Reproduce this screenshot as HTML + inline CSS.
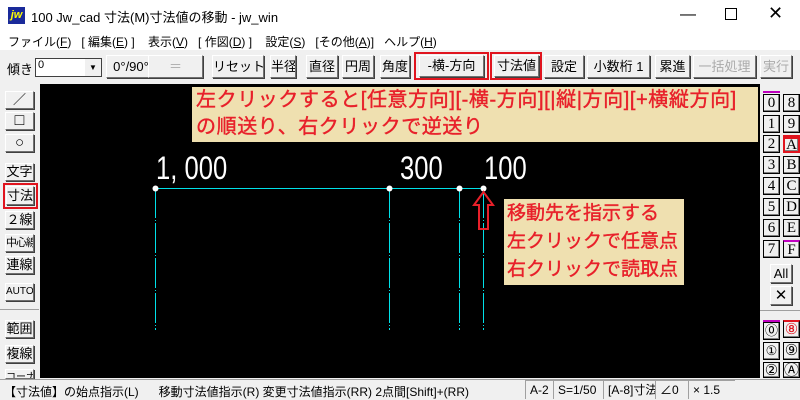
<!DOCTYPE html>
<html style="width:800px;height:400px;overflow:hidden"><head><meta charset="utf-8"><style>
*{margin:0;padding:0;box-sizing:border-box}
body{width:800px;height:400px;overflow:hidden;background:#f0f0f0;font-family:"Liberation Sans","Noto Sans CJK JP",sans-serif;position:relative;font-size:12px;color:#000}
.a{position:absolute}
.btn{position:absolute;background:#f0f0f0;border:1px solid #fff;border-right-color:#707070;border-bottom-color:#707070;box-shadow:1px 1px 0 #404040;text-align:center;font-size:13px;white-space:nowrap;overflow:hidden}
.rb{position:absolute;border:2px solid #e0141e}
.cv{position:absolute;left:40px;top:84px;width:720px;height:294px;background:#000}
.note{position:absolute;background:#efe0b0;color:#e8202a;font-size:20px;line-height:27px;padding-left:4px;white-space:nowrap;-webkit-text-stroke:0.4px #e8202a}
.num{position:absolute;color:#fff;font-size:32px;font-family:"Liberation Sans Narrow","Liberation Sans",sans-serif;transform:scaleX(.8);transform-origin:left}
.rbt{position:absolute;width:17px;height:18px;background:#f0f0f0;border:1px solid #000;box-shadow:inset -1px -1px 0 #808080;font-family:"Liberation Serif",serif;font-size:15px;text-align:center;line-height:16px}
.sb{position:absolute;top:380px;height:19px;border-left:1px solid #a0a0a0;border-top:1px solid #a0a0a0;line-height:18px;padding-left:4px;font-size:12px;white-space:nowrap;overflow:hidden}
.vl{position:absolute;top:104px;width:1px;height:142px;background:repeating-linear-gradient(#00e0e8 0 30px,#000 30px 32px,#00e0e8 32px 33px,#000 33px 35px)}
</style></head><body>
<div class="a" style="left:0;top:0;width:800px;height:31px;background:#fff"></div>
<div class="a" style="left:8px;top:7px;width:17px;height:17px;background:#1a2a9a;color:#ff0;font-weight:bold;font-style:italic;font-size:11px;line-height:17px;text-align:center">jw</div>
<div class="a" style="left:31px;top:7px;font-size:13px">100 Jw_cad 寸法(M)寸法値の移動 - jw_win</div>
<div class="a" style="left:680px;top:6px;font-size:16px">—</div>
<div class="a" style="left:725px;top:8px;width:12px;height:12px;border:1.5px solid #000"></div>
<div class="a" style="left:768px;top:3px;font-size:18px">✕</div>
<div class="a" style="left:0;top:31px;width:800px;height:19px;background:#fff"></div>
<div class="a" style="left:8px;top:33px;font-size:12px;white-space:nowrap">ファイル(<u>F</u>)&nbsp;&nbsp;&nbsp;[ 編集(<u>E</u>) ]&nbsp;&nbsp;&nbsp;&nbsp;表示(<u>V</u>)&nbsp;&nbsp;&nbsp;[ 作図(<u>D</u>) ]&nbsp;&nbsp;&nbsp;&nbsp;設定(<u>S</u>)&nbsp;&nbsp;&nbsp;[その他(<u>A</u>)]&nbsp;&nbsp;&nbsp;ヘルプ(<u>H</u>)</div>
<div class="a" style="left:7px;top:59px;font-size:13px">傾き</div>
<div class="a" style="left:35px;top:58px;width:67px;height:19px;background:#fff;border:1px solid #404040;font-size:11px;padding-left:2px">0<div class="a" style="right:0;top:0;width:16px;height:17px;background:#f0f0f0;font-size:8px;text-align:center;line-height:17px">▼</div></div>
<div class="btn" style="left:106px;top:55px;width:50px;height:23px;line-height:21px">0°/90°</div>
<div class="btn" style="left:148px;top:55px;width:55px;height:23px;line-height:21px;color:#aaa">＝</div>
<div class="btn" style="left:212px;top:55px;width:52px;height:23px;line-height:21px">リセット</div>
<div class="btn" style="left:270px;top:55px;width:26px;height:23px;line-height:21px">半径</div>
<div class="btn" style="left:306px;top:55px;width:32px;height:23px;line-height:21px">直径</div>
<div class="btn" style="left:342px;top:55px;width:32px;height:23px;line-height:21px">円周</div>
<div class="btn" style="left:380px;top:55px;width:30px;height:23px;line-height:21px">角度</div>
<div class="rb" style="left:414px;top:52px;width:75px;height:28px"></div>
<div class="btn" style="left:419px;top:55px;width:65px;height:22px;line-height:20px">-横-方向</div>
<div class="rb" style="left:490px;top:52px;width:52px;height:28px"></div>
<div class="btn" style="left:494px;top:55px;width:45px;height:22px;line-height:20px">寸法値</div>
<div class="btn" style="left:544px;top:55px;width:40px;height:23px;line-height:21px">設定</div>
<div class="btn" style="left:587px;top:55px;width:63px;height:23px;line-height:21px">小数桁 1</div>
<div class="btn" style="left:655px;top:55px;width:35px;height:23px;line-height:21px">累進</div>
<div class="btn" style="left:693px;top:55px;width:63px;height:23px;line-height:21px;color:#aaa">一括処理</div>
<div class="btn" style="left:760px;top:55px;width:32px;height:23px;line-height:21px;color:#aaa">実行</div>
<div class="btn" style="left:5px;top:91px;width:29px;height:18px;line-height:16px">／</div>
<div class="btn" style="left:5px;top:112px;width:29px;height:18px;line-height:16px;font-size:16px">□</div>
<div class="btn" style="left:5px;top:134px;width:29px;height:18px;line-height:16px;font-size:15px">○</div>
<div class="btn" style="left:5px;top:163px;width:29px;height:18px;line-height:16px">文字</div>
<div class="rb" style="left:3px;top:183px;width:35px;height:26px"></div>
<div class="btn" style="left:6px;top:186px;width:28px;height:19px;line-height:17px">寸法</div>
<div class="btn" style="left:5px;top:211px;width:29px;height:18px;line-height:16px">２線</div>
<div class="btn" style="left:5px;top:234px;width:29px;height:18px;line-height:16px;font-size:11px;letter-spacing:-1px">中心線</div>
<div class="btn" style="left:5px;top:256px;width:29px;height:18px;line-height:16px">連線</div>
<div class="btn" style="left:5px;top:283px;width:29px;height:18px;line-height:16px;font-size:10px">AUTO</div>
<div class="a" style="left:0;top:309px;width:39px;height:1px;background:#a0a0a0"></div>
<div class="btn" style="left:5px;top:320px;width:29px;height:18px;line-height:16px">範囲</div>
<div class="btn" style="left:5px;top:345px;width:29px;height:18px;line-height:16px">複線</div>
<div class="btn" style="left:5px;top:369px;width:29px;height:10px;line-height:16px;font-size:10px">コーナー</div>
<div class="cv">
<div class="a" style="left:115px;top:104px;width:329px;height:1px;background:#00e0e8"></div>
<div class="vl" style="left:115px"></div>
<div class="vl" style="left:349px"></div>
<div class="vl" style="left:419px"></div>
<div class="vl" style="left:443px"></div>
<svg width="720" height="294" style="position:absolute;left:0;top:0">
<g fill="#fff"><circle cx="115.5" cy="104.5" r="3"/><circle cx="349.5" cy="104.5" r="3"/><circle cx="419.5" cy="104.5" r="3"/><circle cx="443.5" cy="104.5" r="3"/></g>
<path d="M443.5 108 L453 121 L448 121 L448 145 L439 145 L439 121 L434 121 Z" fill="none" stroke="#e8202a" stroke-width="2"/>
</svg>
<div class="num" style="left:116px;top:66px">1, 000</div>
<div class="num" style="left:360px;top:66px">300</div>
<div class="num" style="left:444px;top:66px">100</div>
</div>
<div class="note" style="left:192px;top:87px;width:566px;height:55px;letter-spacing:0.6px">左クリックすると[任意方向][-横-方向][|縦|方向][+横縦方向]<br>の順送り、右クリックで逆送り</div>
<div class="note" style="left:504px;top:199px;width:180px;height:86px;line-height:28px;padding-top:1px;font-size:19px;padding-left:3px">移動先を指示する<br>左クリックで任意点<br>右クリックで読取点</div>
<div class="a" style="left:763px;top:91px;width:17px;height:2px;background:#c000c0"></div>
<div class="rbt" style="left:763px;top:94px">0</div><div class="rbt" style="left:783px;top:94px">8</div>
<div class="rbt" style="left:763px;top:115px">1</div><div class="rbt" style="left:783px;top:115px">9</div>
<div class="rbt" style="left:763px;top:135px">2</div><div class="rbt" style="left:783px;top:135px;border:2px solid #e0141e;border-top-width:4px;line-height:12px">A</div>
<div class="rbt" style="left:763px;top:156px">3</div><div class="rbt" style="left:783px;top:156px">B</div>
<div class="rbt" style="left:763px;top:177px">4</div><div class="rbt" style="left:783px;top:177px">C</div>
<div class="rbt" style="left:763px;top:198px">5</div><div class="rbt" style="left:783px;top:198px">D</div>
<div class="rbt" style="left:763px;top:219px">6</div><div class="rbt" style="left:783px;top:219px">E</div>
<div class="rbt" style="left:763px;top:240px">7</div><div class="rbt" style="left:783px;top:240px;border-top:2px solid #c000c0">F</div>
<div class="btn" style="left:770px;top:264px;width:22px;height:19px;line-height:17px">All</div>
<div class="btn" style="left:770px;top:286px;width:22px;height:19px;line-height:17px;font-size:15px">✕</div>
<div class="a" style="left:760px;top:310px;width:40px;height:1px;background:#a0a0a0"></div>
<div class="a" style="left:763px;top:320px;width:17px;height:2px;background:#c000c0"></div>
<div class="rbt" style="left:763px;top:322px;font-size:13px">⓪</div><div class="rbt" style="left:783px;top:320px;color:#e0141e;border-top:2px solid #e0141e">⑧</div>
<div class="rbt" style="left:763px;top:342px;font-size:13px">①</div><div class="rbt" style="left:783px;top:342px">⑨</div>
<div class="rbt" style="left:763px;top:362px;height:16px">②</div><div class="rbt" style="left:783px;top:362px;height:16px">Ⓐ</div>
<div class="a" style="left:0;top:379px;width:800px;height:21px;background:#f0f0f0;border-top:1px solid #a0a0a0"></div>
<div class="a" style="left:4px;top:383px;font-size:12px;white-space:nowrap">【寸法値】の始点指示(L)&nbsp;&nbsp;&nbsp;&nbsp;&nbsp;&nbsp;移動寸法値指示(R) 変更寸法値指示(RR) 2点間[Shift]+(RR)</div>
<div class="sb" style="left:525px;width:28px">A-2</div>
<div class="sb" style="left:553px;width:50px">S=1/50</div>
<div class="sb" style="left:603px;width:52px">[A-8]寸法</div>
<div class="sb" style="left:655px;width:33px">∠0</div>
<div class="sb" style="left:688px;width:47px">× 1.5</div>
</body></html>
